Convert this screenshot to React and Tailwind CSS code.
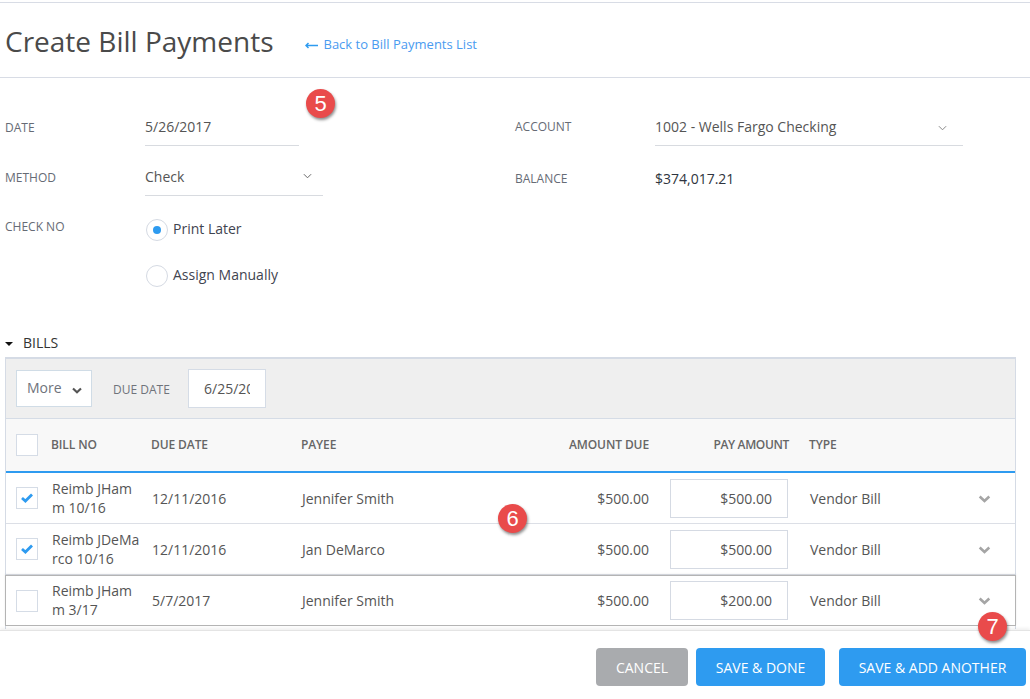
const rows = [
  { bill: ["Reimb JHam", "m 10/16"], due: "12/11/2016", payee: "Jennifer Smith", pay: "$500.00", checked: true },
  { bill: ["Reimb JDeMa", "rco 10/16"], due: "12/11/2016", payee: "Jan DeMarco", pay: "$500.00", checked: true },
  { bill: ["Reimb JHam", "m 3/17"], due: "5/7/2017", payee: "Jennifer Smith", pay: "$200.00", checked: false, focused: true },
];

const gridCols = "grid grid-cols-[40px_100px_150px_200px_153px_160px_1fr] items-center";

function Badge({ n, className }) {
  return (
    <div
      className={
        "absolute flex h-[29px] w-[29px] items-center justify-center rounded-full bg-[#e94b4b] font-['Liberation_Sans',sans-serif] text-[22px] text-white shadow-[1px_2px_3px_rgba(0,0,0,0.45)] " +
        className
      }
    >
      {n}
    </div>
  );
}

function Thin({ className }) {
  return (
    <svg viewBox="0 0 10 6" className={className} fill="none" stroke="currentColor" strokeWidth="1.1">
      <path d="M1 1l4 4 4-4" />
    </svg>
  );
}

function Bold({ className }) {
  return (
    <svg viewBox="0 0 12 8" className={className} fill="none" stroke="currentColor" strokeWidth="2.6">
      <path d="M1.2 1.5L6 6l4.8-4.5" />
    </svg>
  );
}

function Box({ checked }) {
  return (
    <div className="flex h-[22px] w-[22px] items-center justify-center border border-[#d5dce6] bg-white">
      {checked && (
        <svg viewBox="0 0 12 10" className="h-[10px] w-[12px]" fill="none" stroke="#2e9bf0" strokeWidth="2.8">
          <path d="M1 5l3.4 3L11 1.5" />
        </svg>
      )}
    </div>
  );
}

function Radio({ on, label }) {
  return (
    <div className="ml-[1px] flex items-center gap-[5px]">
      <div className="flex h-[22px] w-[22px] items-center justify-center rounded-full border border-[#d5dae3] bg-white">
        {on && <div className="h-2 w-2 rounded-full bg-[#2e9bf0]" />}
      </div>
      <span className="mb-[3px] text-[14px] leading-none text-[#3f4450]">{label}</span>
    </div>
  );
}

export default function App() {
  return (
    <div className="relative h-[699px] w-[1030px] overflow-hidden bg-white font-['Open_Sans',sans-serif] text-[#555]">
      <div className="mt-[2px] flex h-[76px] items-center border-y border-[#d8dce5] pl-[5px]">
        <h1 className="mt-[1px] text-[28px] leading-none text-[#4a4a4a]">Create Bill Payments</h1>
        <a className="ml-[32px] mt-[10px] flex items-center text-[13px] text-[#4a9bf0]">
          <span className="mr-[5px] flex items-center">
            <svg viewBox="0 0 13 7" className="h-[7px] w-[13px]" fill="none" stroke="#2e9bf0" strokeWidth="1.5">
              <path d="M13 3.5H1M3.5 1L1 3.5 3.5 6" />
            </svg>
          </span>
          Back to Bill Payments List
        </a>
      </div>

      <Badge n="5" className="left-[306px] top-[89px]" />
      <Badge n="6" className="left-[498px] top-[504px]" />

      {/* form */}
      <div className="flex h-[252px] pl-[5px]">
        <div className="w-[510px]">
          <div className="flex h-[68px] items-end">
            <span className="mb-[9px] w-[140px] text-[12px] text-[#666b75]">DATE</span>
            <div className="flex h-[41px] w-[154px] items-center border-b border-[#d8dbe0] pt-[2px] text-[14px] text-[#555]">5/26/2017</div>
          </div>
          <div className="flex h-[50px] items-end">
            <span className="mb-[9px] w-[140px] text-[12px] text-[#666b75]">METHOD</span>
            <div className="flex h-[41px] w-[178px] items-center justify-between border-b border-[#d8dbe0] pr-[11px] pt-[2px] text-[14px] text-[#555]">
              Check
              <Thin className="h-[6px] w-[9px] text-[#666]" />
            </div>
          </div>
          <div className="mt-[21px] flex">
            <span className="w-[140px] pt-[1px] text-[12px] leading-[18px] text-[#666b75]">CHECK NO</span>
            <div className="flex flex-col gap-[24px] pt-[2px]">
              <Radio on label="Print Later" />
              <Radio label="Assign Manually" />
            </div>
          </div>
        </div>
        <div className="flex-1">
          <div className="flex h-[68px] items-end">
            <span className="mb-[10px] w-[140px] text-[12px] text-[#666b75]">ACCOUNT</span>
            <div className="flex h-[41px] w-[308px] items-center justify-between border-b border-[#d8dbe0] pr-[16px] pt-[2px] text-[14px] text-[#555]">
              1002 - Wells Fargo Checking
              <Thin className="mt-[3px] h-[6px] w-[9px] text-[#888]" />
            </div>
          </div>
          <div className="mt-[22px] flex items-center">
            <span className="w-[140px] text-[12px] text-[#666b75]">BALANCE</span>
            <span className="mb-[1px] text-[14px] text-[#2f3540]">$374,017.21</span>
          </div>
        </div>
      </div>

      {/* bills */}
      <div className="flex h-[27px] items-center pb-[2px] pl-[5px] text-[14px] text-[#333]">
        <span className="mr-[10px] mt-[2px] h-0 w-0 border-x-[4px] border-t-[4px] border-x-transparent border-t-[#111]" />
        BILLS
      </div>
      <div className="mx-[5px] h-[272px] w-[1011px] border-x border-t-2 border-[#d5dbe5]">
        <div className="flex h-[60px] items-center border-b border-[#d5dce6] bg-[#efefef] pl-[10px]">
          <div className="flex h-[37px] w-[76px] items-center border border-[#d0dce6] bg-white pl-[10px] text-[14px] text-[#6f737b]">
            <span className="mb-[2px]">More</span>
            <Bold className="ml-[10px] mt-[3px] h-[7px] w-[10px] text-[#555]" />
          </div>
          <span className="ml-[21px] mt-[3px] w-[75px] text-[12px] text-[#6f737b]">DUE DATE</span>
          <div className="flex h-[39px] w-[78px] items-center overflow-hidden whitespace-nowrap border border-[#d5dce6] bg-white pl-[15px] text-[14px] text-[#555]">
            <span className="block w-[46px] overflow-hidden">6/25/2017</span>
          </div>
        </div>
        <div className={gridCols + " h-[54px] border-b-2 border-[#2e9bf0] bg-[#f8f8f8] text-[12px] font-semibold tracking-[-0.1px] text-[#666]"}>
          <div className="pl-[10px]">
            <Box />
          </div>
          <div className="pl-[5px]">BILL NO</div>
          <div className="pl-[5px]">DUE DATE</div>
          <div className="pl-[5px]">PAYEE</div>
          <div className="text-right">AMOUNT DUE</div>
          <div className="pr-[20px] text-right tracking-[-0.35px]">PAY AMOUNT</div>
          <div>TYPE</div>
        </div>
        {rows.map((row) => (
          <div
            key={row.bill.join()}
            className={
              gridCols +
              " text-[14px] " +
              (row.focused
                ? "-mx-px h-[51px] border border-[#b4b4b4] shadow-[0_-1px_2px_rgba(0,0,0,0.08)]"
                : "h-[51px] border-b border-[#dcdfe6]")
            }
          >
            <div className="pl-[10px]">
              <Box checked={row.checked} />
            </div>
            <div className={"pl-[6px] leading-[19px]" + (row.focused ? " mb-[2px]" : "")}>
              {row.bill[0]}
              <br />
              {row.bill[1]}
            </div>
            <div className="pl-[6px]">{row.due}</div>
            <div className="pl-[6px]">{row.payee}</div>
            <div className="text-right">$500.00</div>
            <div className="pl-[21px]">
              <div className="flex h-[39px] w-[118px] items-center justify-end border border-[#d5dae3] pr-[15px]">{row.pay}</div>
            </div>
            <div className="relative pl-[1px]">
              Vendor Bill
              <Bold className="absolute left-[169px] top-[7px] h-[8px] w-[13px] text-[#a5a5a5]" />
            </div>
          </div>
        ))}
      </div>

      {/* footer */}
      <div className="absolute inset-x-0 bottom-0 flex h-[69px] items-start justify-end border-t border-[#e4e4e4] bg-white pr-[4px] pt-[17px] shadow-[0_-2px_3px_rgba(0,0,0,0.06)]">
        <button className="h-[38px] w-[92px] rounded bg-[#a9abae] text-[14px] text-white">CANCEL</button>
        <button className="ml-[8px] h-[38px] w-[129px] rounded bg-[#2e9bf0] text-[14px] text-white">SAVE &amp; DONE</button>
        <button className="ml-[14px] h-[38px] w-[187px] rounded bg-[#2e9bf0] text-[14px] text-white">SAVE &amp; ADD ANOTHER</button>
      </div>
      <Badge n="7" className="left-[978px] top-[612px]" />
    </div>
  );
}
